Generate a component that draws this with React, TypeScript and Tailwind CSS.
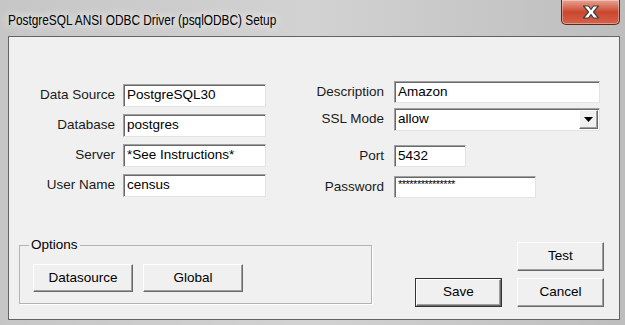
import { ReactNode } from "react";

const sunken =
  "bg-white border border-t-[#a0a0a0] border-l-[#a0a0a0] border-b-[#e3e3e3] border-r-[#e3e3e3] shadow-[inset_1px_1px_0_#696969] flex items-center pl-[3px] text-black";

const raised =
  "bg-[#f0f0f0] border border-t-white border-l-white border-b-[#696969] border-r-[#696969] shadow-[inset_-1px_-1px_0_#a0a0a0] flex items-center justify-center text-black";

const Field = ({ value, w, h = "h-[23px]" }: { value: string; w: string; h?: string }) => (
  <div className={`${sunken} ${w} ${h}`}>{value}</div>
);

const Row = ({ label, labelW, gap, children, className = "" }: { label: string; labelW: string; gap: string; children: ReactNode; className?: string }) => (
  <div className={`flex items-center ${gap} ${className}`}>
    <div className={`${labelW} text-right text-[#1a1a1a]`}>{label}</div>
    {children}
  </div>
);

const Button = ({ label, w, h = "h-[29px]", isDefault = false }: { label: string; w: string; h?: string; isDefault?: boolean }) => (
  <div className={isDefault ? "border border-[#333]" : ""}>
    <div className={`${raised} ${isDefault ? "w-[85px] h-[27px]" : `${w} ${h}`}`}>{label}</div>
  </div>
);

export default function App() {
  return (
    <div
      className="w-[625px] h-[325px] overflow-hidden flex flex-col bg-gradient-to-r from-[#c6c6c6] via-[#d2d2d2] to-[#bdbdbd]"
      style={{ fontFamily: '"Liberation Sans", Arial, sans-serif' }}
    >
      {/* Title bar */}
      <div className="h-[36px] flex items-start justify-between relative">
        <div className="ml-[8px] mt-[9px] text-[15px] text-black whitespace-nowrap origin-left scale-x-[0.79] [text-shadow:0_0_8px_#f2f2f2,0_0_12px_#eeeeee]">
          PostgreSQL ANSI ODBC Driver (psqlODBC) Setup
        </div>
        <div className="mr-[5px] w-[59px] h-[25px] rounded-b-[5px] border border-t-0 border-[#5a2a22] bg-gradient-to-b from-[#e7a493] via-[#c9462d] to-[#d6624a] flex items-center justify-center shadow-[inset_0_0_0_1px_rgba(255,255,255,0.35)]">
          <svg width="20" height="16" viewBox="0 0 20 16">
            <path d="M2.5 2 L7.5 2 L10 5.5 L12.5 2 L17.5 2 L12.5 8 L17.5 14 L12.5 14 L10 10.5 L7.5 14 L2.5 14 L7.5 8 Z" fill="#ffffff" stroke="#404040" strokeWidth="1.2" strokeLinejoin="round" />
          </svg>
        </div>
      </div>

      {/* Client area */}
      <div className="ml-[8px] mr-[5px] h-[284px] bg-[#f0f0f0] border border-[#646464] text-[13.5px] flex flex-col">
        <div className="flex items-start">
          {/* Left column */}
          <div className="pl-[20px] mt-[47px] flex flex-col gap-[7px]">
            <Row label="Data Source" labelW="w-[86px]" gap="gap-[8px]">
              <Field value="PostgreSQL30" w="w-[143px]" />
            </Row>
            <Row label="Database" labelW="w-[86px]" gap="gap-[8px]">
              <Field value="postgres" w="w-[143px]" />
            </Row>
            <Row label="Server" labelW="w-[86px]" gap="gap-[8px]">
              <Field value="*See Instructions*" w="w-[143px]" />
            </Row>
            <Row label="User Name" labelW="w-[86px]" gap="gap-[8px]">
              <Field value="census" w="w-[143px]" />
            </Row>
          </div>

          {/* Right column */}
          <div className="ml-[38px] mt-[44px] flex flex-col">
            <Row label="Description" labelW="w-[80px]" gap="gap-[10px]">
              <Field value="Amazon" w="w-[206px]" h="h-[22px]" />
            </Row>
            <Row label="SSL Mode" labelW="w-[80px]" gap="gap-[10px]" className="mt-[5px]">
              <div className={`${sunken} w-[206px] h-[23px] justify-between pr-[1px]`}>
                <span>allow</span>
                <div className={`${raised} w-[19px] h-[19px]`}>
                  <svg width="9" height="5" viewBox="0 0 9 5">
                    <path d="M0 0 H9 L4.5 5 Z" fill="#000" />
                  </svg>
                </div>
              </div>
            </Row>
            <Row label="Port" labelW="w-[80px]" gap="gap-[10px]" className="mt-[14px]">
              <Field value="5432" w="w-[72px]" h="h-[22px]" />
            </Row>
            <Row label="Password" labelW="w-[80px]" gap="gap-[10px]" className="mt-[9px]">
              <div className={`${sunken} w-[142px] h-[22px] items-start text-[11px] leading-[11px] pt-[2px] tracking-[-0.5px]`}>
                ***************
              </div>
            </Row>
          </div>
        </div>

        {/* Bottom section */}
        <div className="mt-[44px] flex items-start justify-between pr-[15px]">
          <div className="ml-[10px] mt-[3px] w-[353px] h-[59px] border border-[#b4b4b4] shadow-[1px_1px_0_#ffffff] relative flex items-start gap-[10px] pl-[13px] pt-[18px]">
            <div className="absolute left-[9px] top-[-9px] px-[2px] bg-[#f0f0f0] leading-[16px]">Options</div>
            <Button label="Datasource" w="w-[100px]" h="h-[28px]" />
            <Button label="Global" w="w-[100px]" h="h-[28px]" />
          </div>
          <div className="flex items-start gap-[15px]">
            <div className="mt-[36px]">
              <Button label="Save" w="w-[87px]" isDefault />
            </div>
            <div className="flex flex-col gap-[7px]">
              <Button label="Test" w="w-[87px]" />
              <Button label="Cancel" w="w-[87px]" />
            </div>
          </div>
        </div>
      </div>
    </div>
  );
}
